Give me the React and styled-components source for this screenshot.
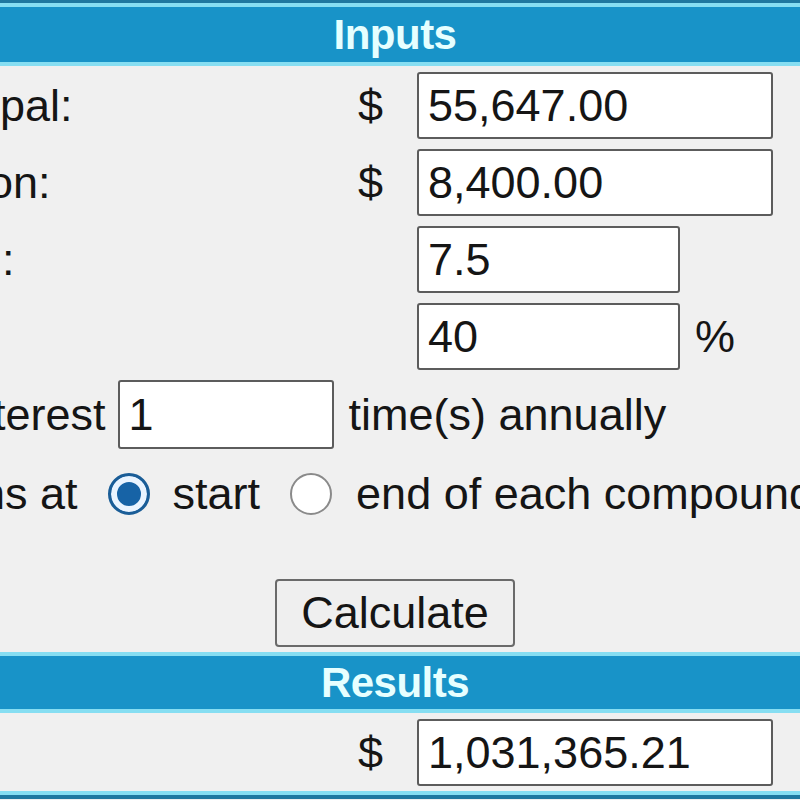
import React from "react";
import styled, { createGlobalStyle } from "styled-components";

const Global = createGlobalStyle`
  html, body { margin: 0; padding: 0; background: #f0f0f0; }
  body { font-family: "Liberation Sans", Arial, sans-serif; color: #151515; }
`;

const Page = styled.div`
  width: 800px;
  height: 800px;
  overflow: hidden;
  background: #f0f0f0;
  display: flex;
  flex-direction: column;
  font-size: 45px;
`;

const Edge = styled.div`
  height: ${(p) => p.$h || 3}px;
  background: #1f78a0;
  flex: none;
`;

const Band = styled.div`
  flex: none;
  height: ${(p) => p.$h}px;
  background: #1893c8;
  border-top: 4px solid #86def2;
  border-bottom: 4px solid #86def2;
  display: flex;
  align-items: center;
  justify-content: center;
  padding-right: 10px;
  margin-top: ${(p) => p.$mt || 0}px;
  color: #e6ffff;
  font-weight: bold;
  font-size: 42px;
  letter-spacing: -0.5px;
`;

const Form = styled.div`
  display: flex;
  flex-direction: column;
  gap: 10px;
  padding-top: ${(p) => p.$pt || 6}px;
  flex: none;
`;

const FieldRow = styled.div`
  display: grid;
  grid-template-columns: 358px 25px auto auto;
  justify-content: start;
  align-items: center;
  height: 67px;
`;

const Label = styled.span`
  white-space: nowrap;
  overflow: hidden;
`;

const Currency = styled.span`
  text-align: left;
`;

const Input = styled.input`
  box-sizing: border-box;
  height: ${(p) => p.$h || 67}px;
  width: ${(p) => p.$w}px;
  margin-left: ${(p) => p.$ml ?? 34}px;
  border: 2px solid #5c5c5c;
  border-radius: 3px;
  background: #fff;
  font-family: "Liberation Sans", Arial, sans-serif;
  font-size: 45px;
  color: #151515;
  padding: 0 0 0 9px;
  outline: none;
`;

const Suffix = styled.span`
  margin-left: 15px;
`;

const InlineRow = styled.div`
  display: flex;
  align-items: center;
  height: ${(p) => p.$h || 69}px;
  margin-top: ${(p) => p.$mt || 0}px;
  white-space: nowrap;
`;

const Clip = styled.span`
  display: inline-block;
  margin-left: ${(p) => p.$shift || 0}px;
`;

const Radio = styled.span`
  box-sizing: border-box;
  flex: none;
  width: 42px;
  height: 42px;
  border-radius: 50%;
  margin: 0 ${(p) => p.$mr}px 0 ${(p) => p.$ml}px;
  background: ${(p) => (p.$checked ? "#1763a6" : "#ffffff")};
  border: ${(p) => (p.$checked ? "3px solid #1a5d97" : "2px solid #8a8a8a")};
  box-shadow: ${(p) => (p.$checked ? "inset 0 0 0 6px #eaf4ff" : "none")};
`;

const ButtonRow = styled.div`
  display: flex;
  justify-content: center;
  padding-right: 10px;
  margin-top: 60px;
  flex: none;
`;

const Button = styled.button`
  width: 240px;
  height: 68px;
  border: 2px solid #6a6a6a;
  border-radius: 4px;
  background: #efefef;
  font-family: "Liberation Sans", Arial, sans-serif;
  font-size: 45px;
  color: #151515;
  padding: 0;
`;

const BottomRule = styled.div`
  flex: none;
  margin-top: 5px;
  border-top: 4px solid #86def2;
  height: 4px;
  background: #1f78a0;
`;

export default function App() {
  return (
    <Page>
      <Global />
      <Edge $h={3} />
      <Band $h={55}>Inputs</Band>
      <Form>
        <FieldRow>
          <Label>pal:</Label>
          <Currency>$</Currency>
          <Input $w={356} defaultValue="55,647.00" />
        </FieldRow>
        <FieldRow>
          <Label>
            <Clip $shift={-12}>on:</Clip>
          </Label>
          <Currency>$</Currency>
          <Input $w={356} defaultValue="8,400.00" />
        </FieldRow>
        <FieldRow>
          <Label>
            <Clip $shift={2}>:</Clip>
          </Label>
          <Currency />
          <Input $w={263} defaultValue="7.5" />
        </FieldRow>
        <FieldRow>
          <Label />
          <Currency />
          <Input $w={263} defaultValue="40" />
          <Suffix>%</Suffix>
        </FieldRow>
        <InlineRow>
          <Clip $shift={-7}>terest</Clip>
          <Input $w={216} $h={69} $ml={12} defaultValue="1" />
          <Suffix>time(s) annually</Suffix>
        </InlineRow>
      </Form>
      <InlineRow $h={50} $mt={20}>
        <Clip $shift={-20}>ns at</Clip>
        <Radio $checked $ml={30} $mr={23} />
        <span>start</span>
        <Radio $ml={30} $mr={24} />
        <span>end of each compounding period</span>
      </InlineRow>
      <ButtonRow>
        <Button type="button">Calculate</Button>
      </ButtonRow>
      <Band $h={53} $mt={5}>Results</Band>
      <Form $pt={6}>
        <FieldRow>
          <Label />
          <Currency>$</Currency>
          <Input $w={356} defaultValue="1,031,365.21" />
        </FieldRow>
      </Form>
      <BottomRule />
    </Page>
  );
}
